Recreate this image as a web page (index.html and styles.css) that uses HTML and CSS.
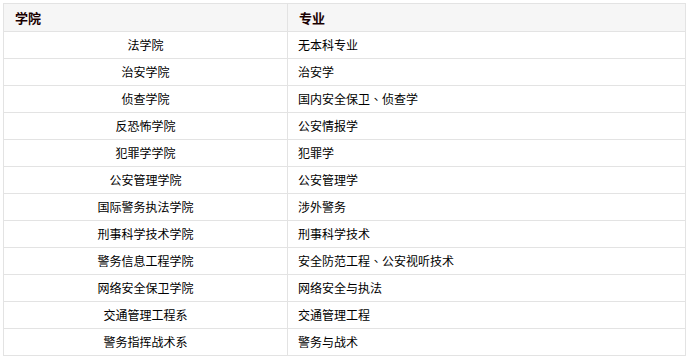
FILE: index.html
```html
<!DOCTYPE html>
<html lang="zh-CN">
<head>
<meta charset="utf-8">
<title>学院专业</title>
<link rel="stylesheet" href="styles.css">
</head>
<body>
<table class="majors">
  <colgroup><col class="col-school"><col class="col-major"></colgroup>
  <thead>
    <tr><th>学院</th><th>专业</th></tr>
  </thead>
  <tbody>
    <tr><td class="school">法学院</td><td>无本科专业</td></tr>
    <tr><td class="school">治安学院</td><td>治安学</td></tr>
    <tr><td class="school">侦查学院</td><td>国内安全保卫<span class="punct" lang="zh-TW">、</span>侦查学</td></tr>
    <tr><td class="school">反恐怖学院</td><td>公安情报学</td></tr>
    <tr><td class="school">犯罪学学院</td><td>犯罪学</td></tr>
    <tr><td class="school">公安管理学院</td><td>公安管理学</td></tr>
    <tr><td class="school">国际警务执法学院</td><td>涉外警务</td></tr>
    <tr><td class="school">刑事科学技术学院</td><td>刑事科学技术</td></tr>
    <tr><td class="school">警务信息工程学院</td><td>安全防范工程<span class="punct" lang="zh-TW">、</span>公安视听技术</td></tr>
    <tr><td class="school">网络安全保卫学院</td><td>网络安全与执法</td></tr>
    <tr><td class="school">交通管理工程系</td><td>交通管理工程</td></tr>
    <tr><td class="school">警务指挥战术系</td><td>警务与战术</td></tr>
  </tbody>
</table>
</body>
</html>
```
FILE: styles.css
```css
html, body {
  margin: 0;
  padding: 0;
  background: #ffffff;
}
body {
  padding: 3px;
  font-family: "Noto Sans CJK SC", "Noto Sans", sans-serif;
  font-size: 12px;
  color: #000000;
}
.majors {
  border-collapse: collapse;
  table-layout: fixed;
  width: 683px;
}
.col-school { width: 284px; }
.majors th,
.majors td {
  border: 1px solid #e3e3e3;
  padding: 0 10px;
  text-align: left;
  vertical-align: middle;
  white-space: nowrap;
  line-height: 16px;
}
.majors th {
  height: 27px;
  padding-left: 11px;
  background: #f6f6f6;
  font-weight: bold;
  font-size: 13px;
  color: #1a0000;
}
.majors td {
  height: 26px;
}
.majors td.school {
  text-align: center;
}
.punct {
  font-family: "Noto Sans CJK TC", "Noto Sans CJK SC", sans-serif;
}
```
